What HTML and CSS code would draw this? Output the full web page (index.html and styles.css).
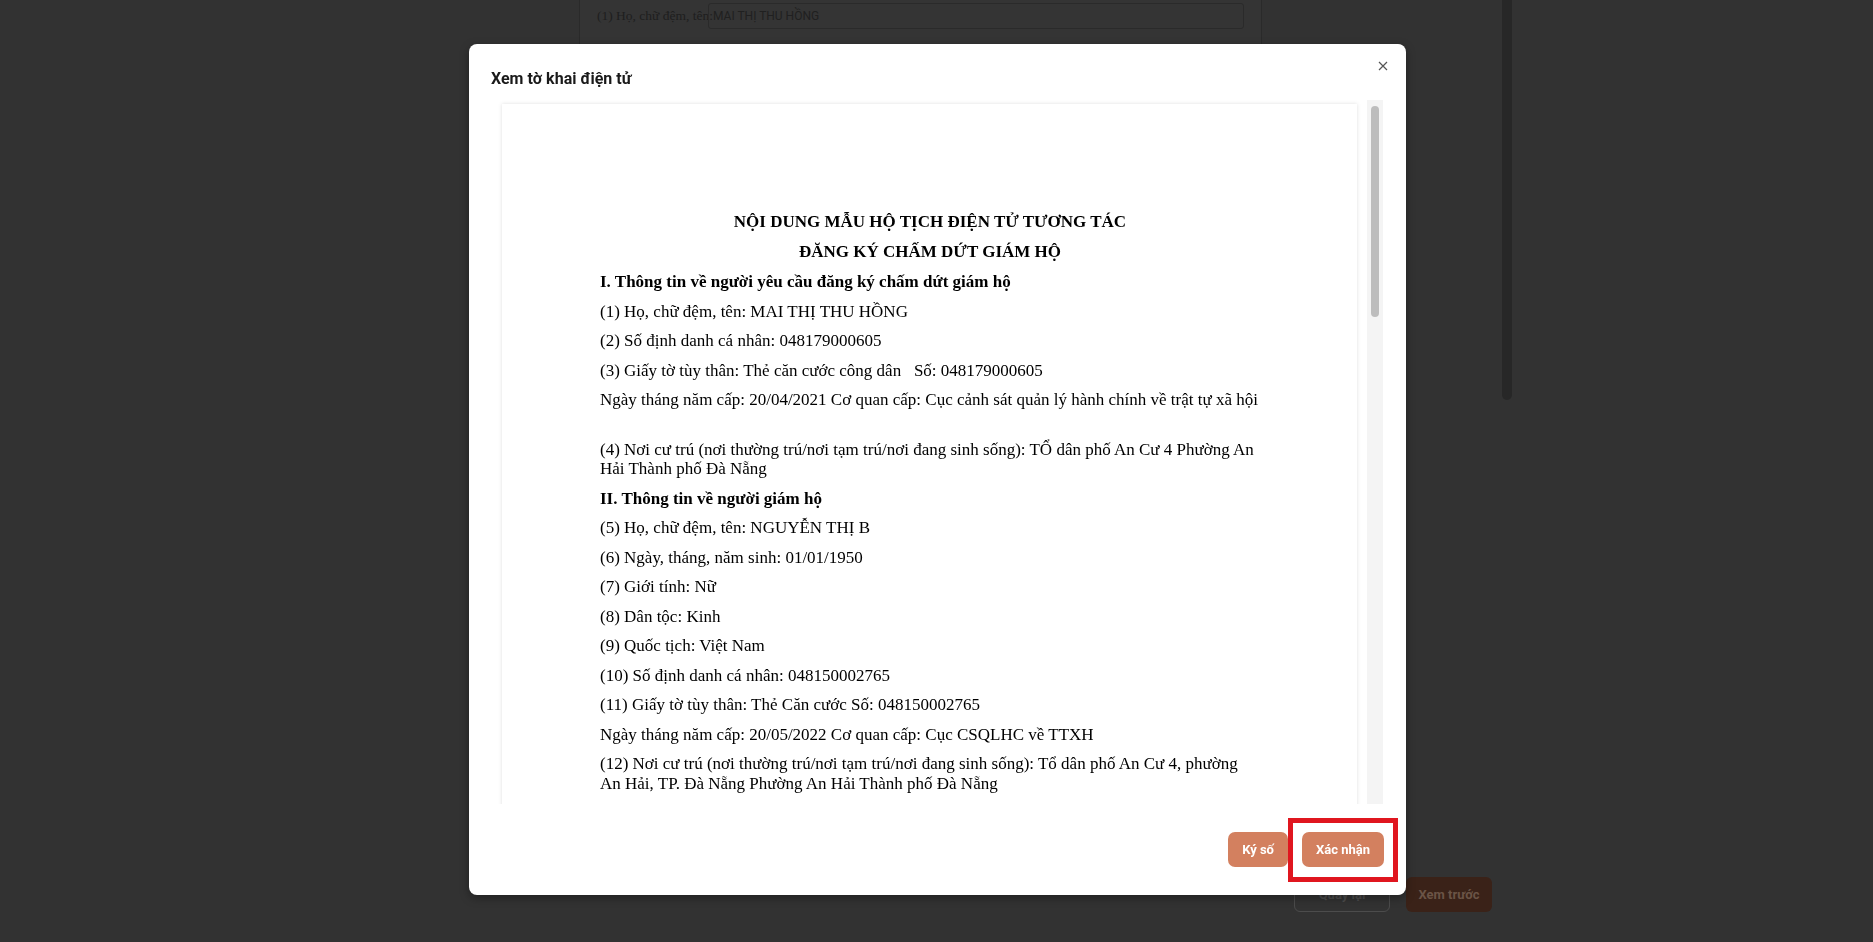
FILE: index.html
```html
<!DOCTYPE html>
<html lang="vi">
<head>
<meta charset="utf-8">
<title>Xem tờ khai điện tử</title>
<link rel="stylesheet" href="styles.css">
</head>
<body>
<div class="page">
  <div class="page-main">
    <section class="form-card">
      <div class="form-row">
        <span class="form-label">(1) Họ, chữ đệm, tên:</span>
        <div class="form-input">MAI THỊ THU HỒNG</div>
      </div>
    </section>
    <div class="page-actions">
      <button class="btn-outline">Quay lại</button>
      <button class="btn-dark">Xem trước</button>
    </div>
  </div>
  <div class="page-scroll"></div>
</div>

<div class="overlay">
  <div class="modal">
    <div class="modal-header">
      <h2 class="modal-title">Xem tờ khai điện tử</h2>
      <button class="modal-close" aria-label="Đóng">
        <svg width="10" height="10" viewBox="0 0 10 10"><path d="M1 1 L9 9 M9 1 L1 9" stroke="#555" stroke-width="1.2" fill="none"/></svg>
      </button>
    </div>
    <div class="viewer-wrap">
      <div class="viewer">
        <div class="paper">
          <p class="doc-title">NỘI DUNG MẪU HỘ TỊCH ĐIỆN TỬ TƯƠNG TÁC</p>
          <p class="doc-title">ĐĂNG KÝ CHẤM DỨT GIÁM HỘ</p>
          <p class="doc-section">I. Thông tin về người yêu cầu đăng ký chấm dứt giám hộ</p>
          <p>(1) Họ, chữ đệm, tên: MAI THỊ THU HỒNG</p>
          <p>(2) Số định danh cá nhân: 048179000605</p>
          <p>(3) Giấy tờ tùy thân: Thẻ căn cước công dân&nbsp;&nbsp; Số: 048179000605</p>
          <p>Ngày tháng năm cấp: 20/04/2021 Cơ quan cấp: Cục cảnh sát quản lý hành chính về trật tự xã hội</p>
          <div class="doc-gap"></div>
          <p>(4) Nơi cư trú (nơi thường trú/nơi tạm trú/nơi đang sinh sống): TỔ dân phố An Cư 4 Phường An Hải Thành phố Đà Nẵng</p>
          <p class="doc-section">II. Thông tin về người giám hộ</p>
          <p>(5) Họ, chữ đệm, tên: NGUYỄN THỊ B</p>
          <p>(6) Ngày, tháng, năm sinh: 01/01/1950</p>
          <p>(7) Giới tính: Nữ</p>
          <p>(8) Dân tộc: Kinh</p>
          <p>(9) Quốc tịch: Việt Nam</p>
          <p>(10) Số định danh cá nhân: 048150002765</p>
          <p>(11) Giấy tờ tùy thân: Thẻ Căn cước Số: 048150002765</p>
          <p>Ngày tháng năm cấp: 20/05/2022 Cơ quan cấp: Cục CSQLHC về TTXH</p>
          <p>(12) Nơi cư trú (nơi thường trú/nơi tạm trú/nơi đang sinh sống): Tổ dân phố An Cư 4, phường An Hải, TP. Đà Nẵng Phường An Hải Thành phố Đà Nẵng</p>
        </div>
      </div>
      <div class="scrollbar"><div class="scrollbar-thumb"></div></div>
    </div>
    <div class="modal-footer">
      <button class="btn-primary">Ký số</button>
      <div class="highlight-wrap">
        <button class="btn-primary">Xác nhận</button>
        <span class="highlight-box"></span>
      </div>
    </div>
  </div>
</div>
</body>
</html>
```

FILE: styles.css
```css
* { box-sizing: border-box; }

html, body {
  margin: 0;
  padding: 0;
}

body {
  width: 1873px;
  height: 942px;
  overflow: hidden;
  background: #323232;
  font-family: Roboto, "Liberation Sans", Arial, sans-serif;
}

button {
  font-family: inherit;
  cursor: pointer;
}

/* ---------- underlying page (dimmed) ---------- */
.page {
  display: flex;
  height: 942px;
}

.page-main {
  margin-left: 579px;
  width: 913px;
  display: flex;
  flex-direction: column;
}

.form-card {
  width: 683px;
  height: 843px;
  background: #343434;
  border-left: 1px solid #2a2a2a;
  border-right: 1px solid #2a2a2a;
}

.form-row {
  display: flex;
  align-items: center;
  padding: 3px 0 0 17px;
}

.form-label {
  font-family: "Liberation Serif", "Times New Roman", serif;
  font-size: 13.5px;
  color: #1e1e1e;
  width: 111px;
  white-space: nowrap;
}

.form-input {
  width: 536px;
  height: 26px;
  border: 1px solid #2a2a2a;
  border-radius: 3px;
  padding: 0 4px;
  display: flex;
  align-items: center;
  font-size: 12px;
  color: #202020;
}

.page-actions {
  margin-top: 34px;
  margin-left: 715px;
  display: flex;
  gap: 16px;
}

.btn-outline,
.btn-dark {
  height: 35px;
  border-radius: 6px;
  font-size: 13px;
  font-weight: 700;
  padding: 0;
}

.btn-outline {
  width: 96px;
  background: transparent;
  border: 1px solid #4c4c4c;
  color: #4c4c4c;
}

.btn-dark {
  width: 86px;
  background: #3a2218;
  border: none;
  color: #6b5446;
}

.page-scroll {
  margin-left: 10px;
  width: 10px;
  height: 400px;
  background: #272727;
  border-radius: 0 0 5px 5px;
}

/* ---------- modal ---------- */
.overlay {
  position: fixed;
  inset: 0;
  display: flex;
  justify-content: center;
  align-items: flex-start;
  padding: 44px 0 0 2px;
}

.modal {
  width: 937px;
  height: 851px;
  background: #fff;
  border-radius: 8px;
  box-shadow: 0 3px 10px rgba(0, 0, 0, 0.35);
  display: flex;
  flex-direction: column;
}

.modal-header {
  display: flex;
  justify-content: space-between;
  align-items: flex-start;
  padding: 0 18px 0 22px;
  height: 56px;
}

.modal-title {
  margin: 25px 0 0;
  font-size: 16px;
  line-height: 20px;
  font-weight: 700;
  color: #1a1a1a;
}

.modal-close {
  margin-top: 17px;
  width: 10px;
  height: 10px;
  padding: 0;
  border: none;
  background: none;
  display: flex;
}

.viewer-wrap {
  display: flex;
  margin: 0 23px 0 28px;
  height: 704px;
}

.viewer {
  flex: 1;
  overflow: hidden;
  padding: 4px 10px 0 5px;
}

.scrollbar {
  width: 16px;
  background: #f4f4f4;
  padding: 6px 4px 0;
}

.scrollbar-thumb {
  height: 211px;
  background: #bdbdbd;
  border-radius: 4px;
}

.paper {
  width: 855px;
  min-height: 2330px;
  background: #fff;
  box-shadow: 0 0 4px rgba(0, 0, 0, 0.13);
  padding: 108px 97px 40px 98px;
  font-family: "Liberation Serif", "Times New Roman", serif;
  font-size: 17px;
  line-height: 19.5px;
  color: #000;
}

.paper p {
  margin: 0 0 10px;
}

.paper .doc-title {
  text-align: center;
  font-weight: 700;
  margin-bottom: 10.5px;
}

.paper .doc-section {
  font-weight: 700;
}

.doc-gap {
  height: 20px;
}

.modal-footer {
  display: flex;
  justify-content: flex-end;
  gap: 14px;
  padding: 28px 22px 0 0;
}

.btn-primary {
  height: 35px;
  padding: 0 14px;
  border: none;
  border-radius: 7px;
  background: #d3805f;
  color: #fff;
  font-size: 13px;
  font-weight: 700;
}

.highlight-wrap {
  position: relative;
  display: flex;
}

.highlight-box {
  position: absolute;
  left: -14px;
  right: -14px;
  top: -14px;
  bottom: -15px;
  border: 5px solid #e0161f;
  pointer-events: none;
}
```
